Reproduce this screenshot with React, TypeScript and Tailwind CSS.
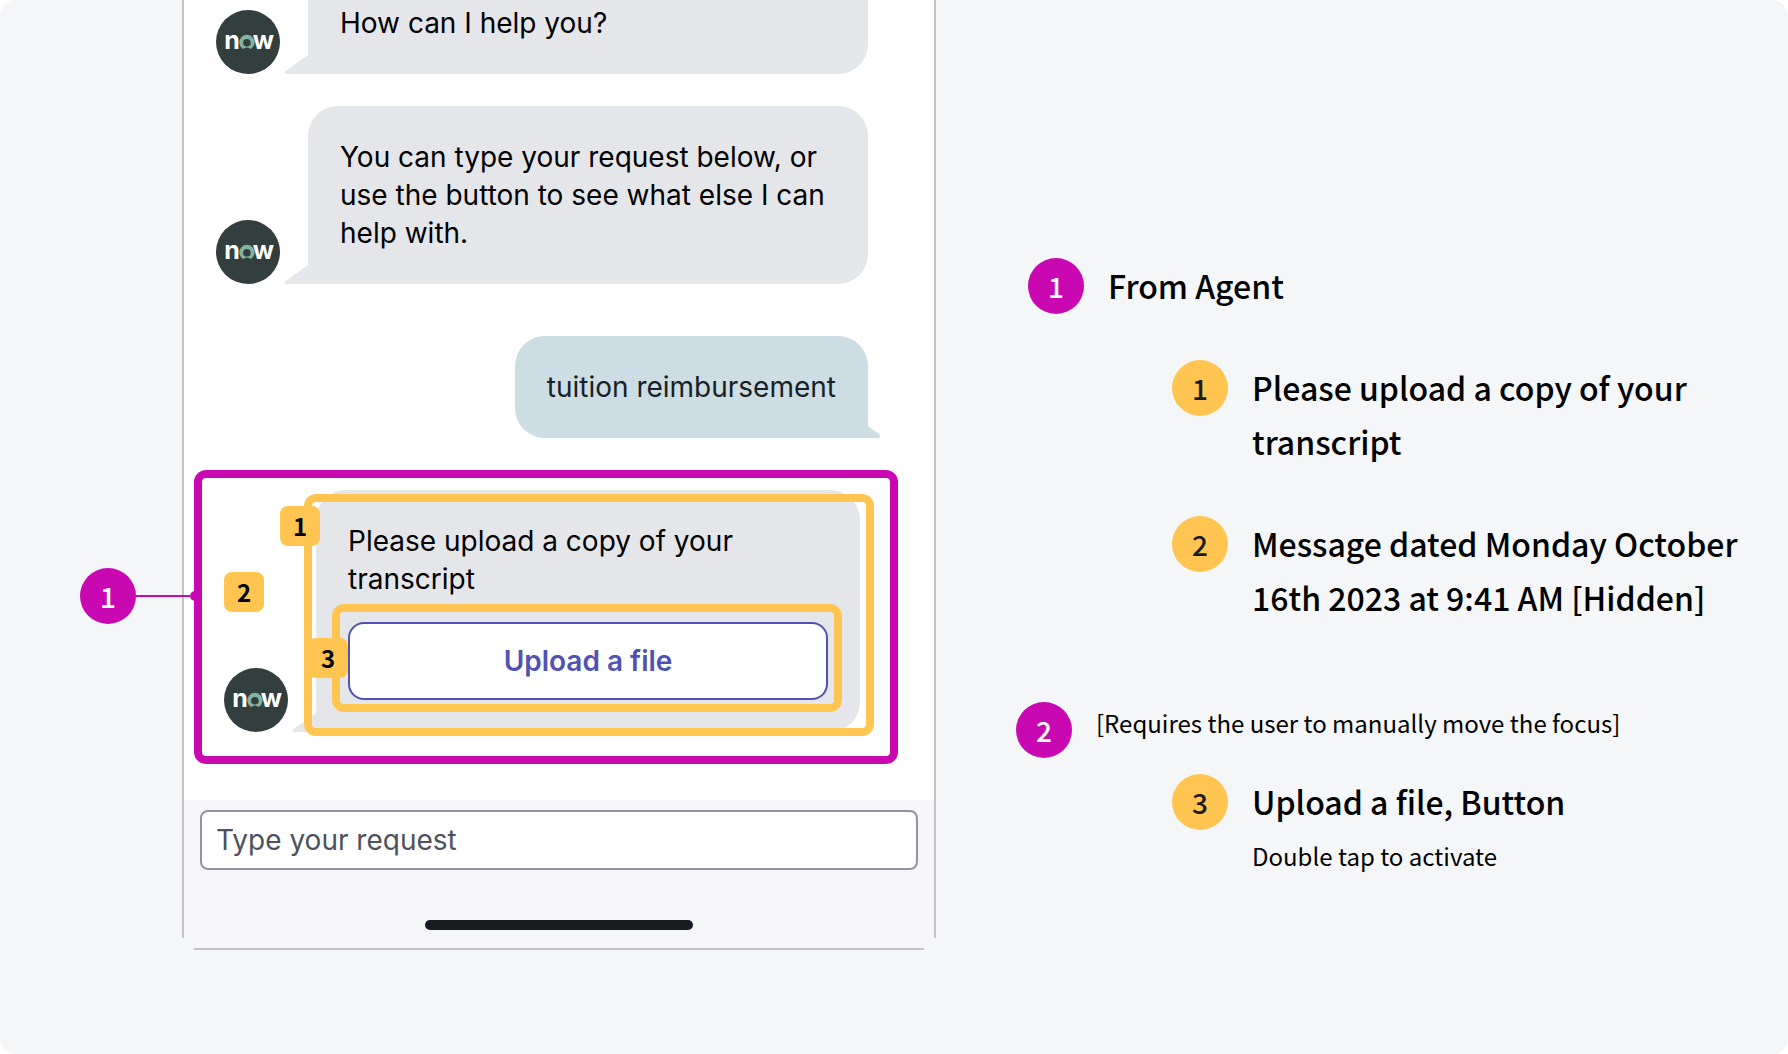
import type { ReactNode } from 'react';
import clsx from 'clsx';

const LEGEND_FONT = "font-['Noto_Sans_CJK_JP','Noto_Sans',sans-serif]";

type Tone = 'pink' | 'yellow';

interface LegendItemProps {
  tone: Tone;
  step: number;
  title: string;
  hint?: string;
}

function NowAvatar() {
  return (
    <svg width="64" height="64" viewBox="0 0 64 64" role="img" aria-label="now" className="shrink-0">
      <circle cx="32" cy="32" r="32" fill="#333f3e" />
      <text x="16" y="38.5" textAnchor="middle" fontSize="25" fontWeight="700" fill="#fff" fontFamily="Inter, sans-serif">n</text>
      <text x="47.5" y="38.5" textAnchor="middle" fontSize="25" fontWeight="700" fill="#fff" fontFamily="Inter, sans-serif">w</text>
      <path d="M26 38.2a7.6 7.6 0 1 1 9.8 0Q34.6 39.2 33.4 38.2Q31 36.8 28.5 38.2Q27.2 39.2 26 38.2Z" fill="#81b5a1" />
      <circle cx="30.9" cy="32.8" r="3.8" fill="#333f3e" />
    </svg>
  );
}

function AgentBubble({ children, cut = false }: { children: ReactNode; cut?: boolean }) {
  return (
    <div
      className={clsx(
        'relative min-w-0 flex-1 rounded-br-[30px] bg-[#e5e6ea] px-8 pb-8',
        cut ? 'pt-1' : 'rounded-t-[30px] pt-8'
      )}
    >
      <svg width="25" height="19" viewBox="0 0 25 19" className="absolute right-full bottom-0 -mr-px" aria-hidden="true">
        <path d="M25 0.5L22.5 1L1 16.5Q-0.5 19 2 19H25Z" fill="#e5e6ea" />
      </svg>
      {children}
    </div>
  );
}

function StepCircle({ tone, step }: { tone: Tone; step: number }) {
  return (
    <span
      className={clsx(
        'flex size-14 shrink-0 items-center justify-center rounded-full text-[28px] leading-[56px] font-medium',
        LEGEND_FONT,
        tone === 'pink' ? 'bg-[#c908b2] text-white' : 'bg-[#ffc550] text-[#181b1f]'
      )}
    >
      {step}
    </span>
  );
}

function FocusBadge({ step, className }: { step: number; className: string }) {
  return (
    <span
      className={clsx(
        'absolute flex size-10 items-center justify-center rounded-lg bg-[#ffc550] text-2xl leading-10 font-bold text-black',
        LEGEND_FONT,
        className
      )}
    >
      {step}
    </span>
  );
}

function LegendItem({ tone, step, title, hint }: LegendItemProps) {
  return (
    <li className="flex gap-6">
      <StepCircle tone={tone} step={step} />
      <div>
        <p className="text-[32px] leading-[54px] font-medium">{title}</p>
        {hint && <p className="text-2xl leading-[56px]">{hint}</p>}
      </div>
    </li>
  );
}

export default function App() {
  return (
    <main className="flex min-h-screen items-start rounded-2xl bg-[#f4f6f8] pl-[182px] font-['Inter',sans-serif] text-black">
      {/* Phone */}
      <section className="relative flex w-[754px] shrink-0 flex-col border-2 border-t-0 border-[#c4c4c6] bg-white text-[28px] leading-[38px]">
        <div className="flex items-end gap-7 pr-[66px] pl-8">
          <NowAvatar />
          <AgentBubble cut>
            <p>How can I help you?</p>
          </AgentBubble>
        </div>

        <div className="mt-8 flex items-end gap-7 pr-[66px] pl-8">
          <NowAvatar />
          <AgentBubble>
            <p>You can type your request below, or use the button to see what else I can help with.</p>
          </AgentBubble>
        </div>

        <div className="mt-[52px] flex justify-end pr-[66px]">
          <div className="relative rounded-t-[30px] rounded-bl-[30px] bg-[#ccdde3] p-8 text-[#181f26]">
            <p>tuition reimbursement</p>
            <svg width="13" height="13" viewBox="0 0 13 13" className="absolute bottom-0 left-full -ml-px" aria-hidden="true">
              <path d="M0 0.5L11.5 8.5Q14 11 12 13H0Z" fill="#ccdde3" />
            </svg>
          </div>
        </div>

        {/* Focused message */}
        <div className="relative mt-8 mr-9 ml-2.5 rounded-xl border-8 border-[#c908b2] pt-3 pr-[30px] pb-6 pl-[22px]">
          <div className="absolute top-[90px] right-full flex items-center">
            <StepCircle tone="pink" step={1} />
            <span className="h-0.5 w-[54px] bg-[#c908b2]" />
            <span className="h-2.5 w-3 rounded-l-full bg-[#c908b2]" />
          </div>

          <div className="flex items-end gap-7">
            <NowAvatar />
            <AgentBubble>
              <p>Please upload a copy of your transcript</p>
              <div className="absolute top-1 -right-3.5 -bottom-1 -left-3 rounded-xl border-8 border-[#ffc550]" />
              <div className="relative mt-6">
                <button
                  type="button"
                  className="block h-[78px] w-full rounded-2xl border-2 border-[#4f52b2] bg-white font-semibold text-[#4f52b2]"
                >
                  Upload a file
                </button>
                <div className="pointer-events-none absolute -top-[18px] -right-3.5 -bottom-3 -left-4 rounded-xl border-8 border-[#ffc550]" />
                <FocusBadge step={3} className="top-4 -left-10" />
              </div>
              <FocusBadge step={1} className="top-4 -left-9" />
            </AgentBubble>
          </div>
          <FocusBadge step={2} className="top-[94px] left-[22px]" />
        </div>

        {/* Composer */}
        <div className="mt-9 bg-[#f6f6f8] px-4 pt-2.5 pb-[18px]">
          <input
            type="text"
            aria-label="Type your request"
            placeholder="Type your request"
            className="block h-[60px] w-full rounded-lg border-2 border-[#9292a4] bg-white px-3.5 placeholder:text-[#4d5160]"
          />
          <div className="mx-auto mt-[50px] h-2.5 w-[268px] rounded-full bg-[#181b1f]" />
        </div>

        {/* The frame stays open at its bottom corners */}
        <span className="absolute -bottom-0.5 -left-0.5 size-3 bg-[#f4f6f8]" />
        <span className="absolute -right-0.5 -bottom-0.5 size-3 bg-[#f4f6f8]" />
      </section>

      {/* Reading order */}
      <section className={clsx('min-w-0 flex-1 pt-[258px] pr-6 pl-20', LEGEND_FONT)}>
        <ul className="pl-3">
          <LegendItem tone="pink" step={1} title="From Agent" />
        </ul>
        <ul className="mt-[46px] flex flex-col gap-12 pl-[156px]">
          <LegendItem tone="yellow" step={1} title="Please upload a copy of your transcript" />
          <LegendItem tone="yellow" step={2} title="Message dated Monday October 16th 2023 at 9:41 AM [Hidden]" />
        </ul>
        <div className="mt-[78px] flex gap-6">
          <StepCircle tone="pink" step={2} />
          <p className="text-2xl leading-[42px]">[Requires the user to manually move the focus]</p>
        </div>
        <ul className="mt-4 pl-[156px]">
          <LegendItem tone="yellow" step={3} title="Upload a file, Button" hint="Double tap to activate" />
        </ul>
      </section>
    </main>
  );
}
